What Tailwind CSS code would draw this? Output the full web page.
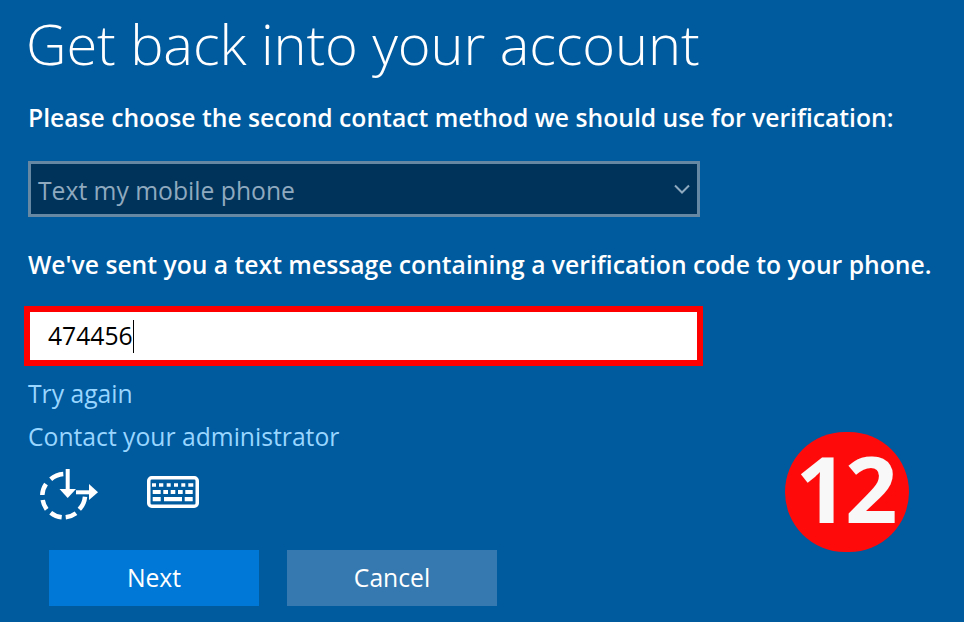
<!DOCTYPE html>
<html lang="en">
<head>
    <meta charset="UTF-8">
    <script src="https://cdn.jsdelivr.net/npm/@tailwindcss/browser@4"></script>
    <title>Get back into your account</title>
</head>
<body class="bg-[#005a9e] overflow-hidden">
    <div class="relative w-[964px] h-[622px] overflow-hidden pl-[28px] text-white font-['Open_Sans',sans-serif]">
        <h1 class="h-[89px] -ml-[2px] leading-[86px] text-[56px] font-light tracking-[-0.1px] whitespace-nowrap">Get back into your account</h1>
        <p class="mt-[14px] h-[30px] leading-[30px] text-[24.7px] font-semibold whitespace-nowrap">Please choose the second contact method we should use for verification:</p>

        <div class="mt-[28px] w-[672px] h-[56px] bg-[#00335a] border-[3px] border-[#6688a3] flex items-center justify-between pl-[7px] pr-[7px]">
            <span class="text-[24.7px] text-[#8fa9bf] relative top-[2px]">Text my mobile phone</span>
            <svg width="16" height="10" viewBox="0 0 16 10" fill="none" stroke="#8fa9bf" stroke-width="2"><path d="M1 1.5 8 8.5 15 1.5"/></svg>
        </div>

        <p class="mt-[33px] h-[30px] leading-[30px] text-[24.7px] font-semibold whitespace-nowrap">We've sent you a text message containing a verification code to your phone.</p>

        <div class="mt-[26px] -ml-[4px] w-[679px] h-[60px] bg-white border-[6px] border-[#ff0000] flex items-center pl-[18px] text-[24.7px] text-black">
            <span class="leading-none">474456</span><span class="w-px h-[33px] bg-black"></span>
        </div>

        <a class="block mt-[13px] h-[30px] leading-[30px] text-[24.7px] text-[#99d6ff]">Try again</a>
        <a class="block mt-[13px] h-[30px] leading-[30px] text-[24.7px] text-[#99d6ff]">Contact your administrator</a>

        <div class="mt-[14px] ml-[10px] flex items-start gap-[47px] h-[56px]">
            <svg class="shrink-0" width="62" height="56" viewBox="0 0 62 56" fill="none" stroke="white" stroke-width="4.5">
                <path d="M25.3 8A21 21 0 0 0 12.7 13.3M8 18A21 21 0 0 0 4.3 29M4.7 34A21 21 0 0 0 8.7 43.3M12.7 46.7A21 21 0 0 0 23.7 51.3M27.7 51.3A21 21 0 0 0 38 47.3M41.3 43.3A21 21 0 0 0 47 30.7"/>
                <path d="M29.7 3V26" stroke-width="4"/>
                <path d="M21.5 23H38L29.7 32Z" fill="white" stroke="none"/>
                <path d="M38 26.3H54" stroke-width="4"/>
                <path d="M51 18 60 26.3 51 34Z" fill="white" stroke="none"/>
            </svg>
            <svg class="shrink-0 mt-[10px]" width="52" height="32" viewBox="0 0 52 32" fill="none">
                <rect x="1.75" y="1.75" width="48.5" height="28.5" rx="3" stroke="white" stroke-width="3.5"/>
                <path fill="white" d="M5 7.3h4v3.4H5zM12 7.3h4.3v3.4H12zM19.7 7.3h4v3.4h-4zM27 7.3h4v3.4h-4zM34.3 7.3h4v3.4h-4zM41.3 7.3h5v3.4h-5zM5.7 14h8v4h-8zM16.3 14H21v4h-4.7zM23.7 14h4.6v4h-4.6zM31 14h4.7v4H31zM38.3 14h7.4v4h-7.4zM5.7 21h8v4.3h-8zM17 21h18v4.3H17zM37.7 21h8v4.3h-8z"/>
            </svg>
        </div>

        <div class="mt-[28px] ml-[21px] flex gap-[28px]">
            <button class="w-[210px] h-[56px] bg-[#0078d7] text-[24.7px] text-white">Next</button>
            <button class="w-[210px] h-[56px] bg-[#3679b0] text-[24.7px] text-white">Cancel</button>
        </div>

        <div class="absolute left-[785px] top-[432px] w-[124px] h-[120px] rounded-full bg-[#ff0a0a] flex items-center justify-center pr-[4px] pb-[9px] text-[92px] font-bold tracking-[-3px] text-[#f8f8f8] leading-none">12</div>
    </div>
</body>
</html>
